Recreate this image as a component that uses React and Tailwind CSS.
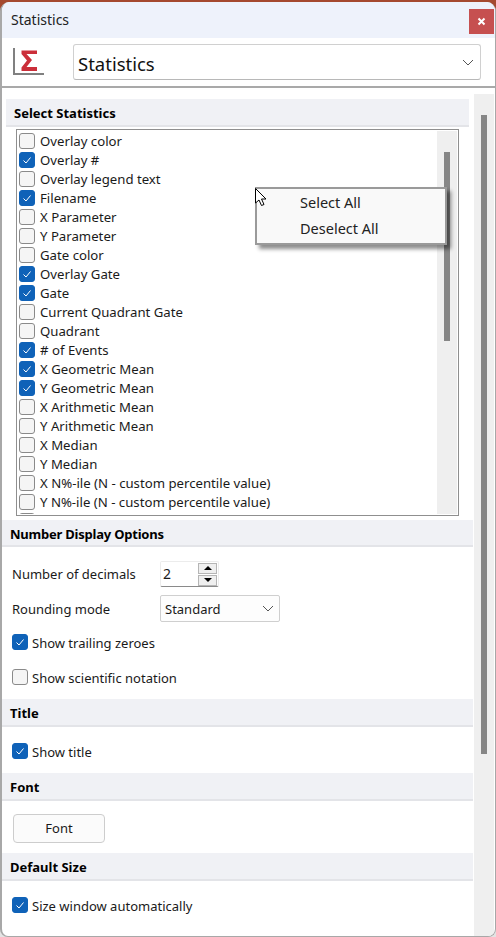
const statRows = [
  ["Overlay color", false],
  ["Overlay #", true],
  ["Overlay legend text", false],
  ["Filename", true],
  ["X Parameter", false],
  ["Y Parameter", false],
  ["Gate color", false],
  ["Overlay Gate", true],
  ["Gate", true],
  ["Current Quadrant Gate", false],
  ["Quadrant", false],
  ["# of Events", true],
  ["X Geometric Mean", true],
  ["Y Geometric Mean", true],
  ["X Arithmetic Mean", false],
  ["Y Arithmetic Mean", false],
  ["X Median", false],
  ["Y Median", false],
  ["X N%-ile (N - custom percentile value)", false],
  ["Y N%-ile (N - custom percentile value)", false],
  ["", false],
];

const Checkbox = ({ checked }) => (
  <span
    className={`flex w-4 h-4 shrink-0 items-center justify-center rounded-[3px] border ${
      checked ? "bg-[#0f62b8] border-[#0f62b8]" : "bg-[#f5f5f5] border-[#8a8a8a]"
    }`}
  >
    {checked && (
      <svg width="10" height="10" viewBox="0 0 10 10" fill="none">
        <path d="M1.5 5.5 L4 8 L8.5 2.5" stroke="white" strokeWidth="1" />
      </svg>
    )}
  </span>
);

const SectionHeader = ({ children, className }) => (
  <div
    className={`flex items-center pt-[3px] bg-[#f0f1f5] border-b-2 border-[#e3e4e8] font-bold text-[13px] text-black ${className}`}
  >
    {children}
  </div>
);

const CheckRow = ({ checked, label, className }) => (
  <div className={`flex items-center gap-1 ml-[10px] h-4 ${className}`}>
    <Checkbox checked={checked} />
    <span className="pt-[2px]">{label}</span>
  </div>
);

const Chevron = ({ className }) => (
  <svg width="12" height="7" viewBox="0 0 12 7" fill="none" className={className}>
    <path d="M1 1 L6 6 L11 1" stroke="#555" strokeWidth="1" />
  </svg>
);

export default function App() {
  return (
    <div
      className="relative w-[496px] h-[937px] overflow-hidden bg-[linear-gradient(#a5492f_0_30px,#e4e4e4_30px)] text-[13px] text-[#1a1a1a] leading-none"
      style={{ fontFamily: '"Noto Sans", "Open Sans", sans-serif' }}
    >
      <div className="flex flex-col h-[935px] mt-[2px] rounded-t-[9px] rounded-b-[8px] bg-white border-l-2 border-r border-b border-[#a8a8a8] overflow-hidden">
        {/* TITLE BAR */}
        <div className="flex items-center justify-between h-[36px] shrink-0 bg-[#eef2fb] pl-[9px] pr-[1px]">
          <span className="text-[14px] text-[#222]">Statistics</span>
          <button className="flex items-center justify-center w-[25px] h-[25px] mt-[7px] mb-[4px] bg-[#c65050] text-white">
            <svg width="9" height="9" viewBox="0 0 9 9" fill="none">
              <path d="M1.5 1.5 L7.5 7.5 M7.5 1.5 L1.5 7.5" stroke="white" strokeWidth="2" />
            </svg>
          </button>
        </div>

        {/* HEADER */}
        <div className="flex items-center h-[50px] shrink-0 border-b-2 border-[#a9a9a9] pl-[11px] pr-[14px]">
          <svg width="32" height="30" viewBox="0 0 32 30" fill="none" className="shrink-0 mt-[-1px]">
            <path d="M1 1 V27 H31" stroke="#808080" strokeWidth="2" />
            <path d="M8.5 3.5 H24 V7 H13.5 L19 13 L13.5 20 H24 V24 H8.5 V20.5 L14 13.5 L8.5 7 Z" fill="#cb2f3a" />
          </svg>
          <div className="flex items-center justify-between flex-1 h-[36px] ml-[28px] pl-1 pr-[6px] bg-white border border-[#d0d0d0] border-b-[#b8b8b8] rounded-[3px] text-[18.5px] text-[#111]">
            <span className="pt-[4px]">Statistics</span>
            <Chevron />
          </div>
        </div>

        {/* BODY */}
        <div className="flex flex-1 min-h-0">
          <div className="w-[471px] shrink-0 pt-[11px]">
            <SectionHeader className="h-[28px] mx-1 pl-2">Select Statistics</SectionHeader>
            <div className="flex h-[387px] ml-[14px] mr-[14px] mt-[2px] p-[1px] border border-[#8f8f8f] overflow-hidden">
              <div className="flex-1 pl-[1px] overflow-hidden text-[13.2px]">
                {statRows.map(([label, checked], index) => (
                  <div key={index} className="flex items-center gap-[5px] h-[19px]">
                    <Checkbox checked={checked} />
                    <span className="pt-[2px]">{label}</span>
                  </div>
                ))}
              </div>
              <div className="w-[20px] shrink-0 bg-[#efefef] pt-[21px] flex justify-center">
                <div className="w-[6px] h-[189px] bg-[#868686]" />
              </div>
            </div>

            <SectionHeader className="h-[27px] mt-1 pl-2 tracking-[-0.22px]">Number Display Options</SectionHeader>
            <div className="flex items-center h-[26px] mt-[14px] ml-[10px]">
              <span className="w-[148px]">Number of decimals</span>
              <div className="flex items-center justify-between w-[59px] h-[26px] bg-white border border-[#ececec] border-b-[#8a8a8a] rounded-[2px] pl-[2px] pr-[1px]">
                <span className="text-[14px]">2</span>
                <div className="flex flex-col gap-[1px]">
                  <span className="flex items-center justify-center w-[19px] h-[11px] bg-[#efefef] border border-[#b5b5b5]">
                    <span className="w-0 h-0 border-x-[4px] border-x-transparent border-b-[4px] border-b-black" />
                  </span>
                  <span className="flex items-center justify-center w-[19px] h-[11px] bg-[#efefef] border border-[#b5b5b5]">
                    <span className="w-0 h-0 border-x-[4px] border-x-transparent border-t-[4px] border-t-black" />
                  </span>
                </div>
              </div>
            </div>
            <div className="flex items-center h-[27px] mt-[8px] ml-[10px]">
              <span className="w-[148px] pt-[2px]">Rounding mode</span>
              <div className="flex items-center justify-between w-[120px] h-[27px] bg-[#fdfdfd] border border-[#cfcfcf] rounded-[2px] pl-1 pr-[5px]">
                <span className="pt-[2px]">Standard</span>
                <Chevron />
              </div>
            </div>
            <CheckRow checked label="Show trailing zeroes" className="mt-[12px]" />
            <CheckRow checked={false} label="Show scientific notation" className="mt-[19px]" />

            <SectionHeader className="h-[28px] mt-[14px] pl-2">Title</SectionHeader>
            <CheckRow checked label="Show title" className="mt-[16px]" />

            <SectionHeader className="h-[28px] mt-[14px] pl-2">Font</SectionHeader>
            <button className="block w-[92px] h-[29px] ml-[11px] mt-[13px] bg-[#fbfbfb] border border-[#cdcdcd] rounded-[4px]">
              Font
            </button>

            <SectionHeader className="h-[28px] mt-[10px] pl-2">Default Size</SectionHeader>
            <CheckRow checked label="Size window automatically" className="mt-[16px]" />
          </div>

          <div className="w-[20px] ml-[1px] mt-[6px] pt-[21px] bg-[#efefef] flex justify-center">
            <div className="w-[6px] h-[639px] bg-[#868686]" />
          </div>
        </div>
      </div>

      {/* CONTEXT MENU */}
      <div className="absolute left-[255px] top-[187px] flex flex-col w-[192px] h-[58px] pl-[43px] pt-[6px] gap-[10px] bg-[#f9f9f9] border-2 border-[#9a9a9a] shadow-[4px_4px_4px_rgba(0,0,0,0.45)] text-[14.5px] text-[#222]">
        <span className="h-[16px]">Select All</span>
        <span className="h-[16px]">Deselect All</span>
      </div>
      <svg width="13" height="19" viewBox="0 0 13 19" className="absolute left-[255px] top-[188px]">
        <path d="M0.5 0.5 V15 L4 12 L6.5 17.5 L9 16.5 L6.5 11 H11 Z" fill="white" stroke="black" strokeWidth="1" />
      </svg>
    </div>
  );
}
